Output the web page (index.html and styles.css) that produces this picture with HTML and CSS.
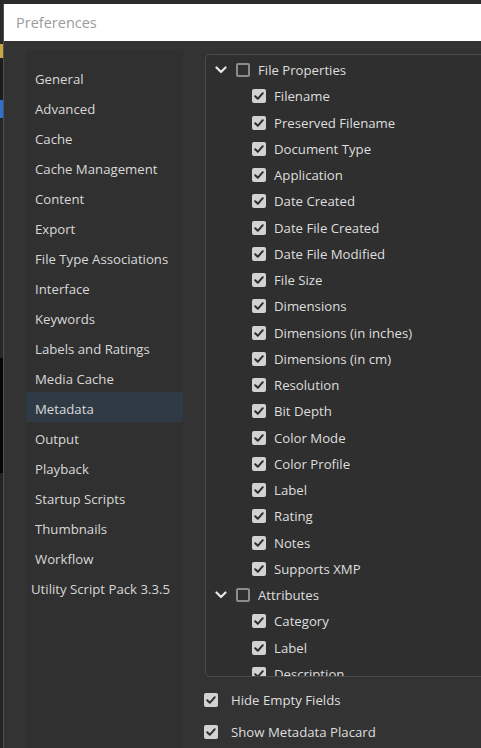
FILE: index.html
```html
<!DOCTYPE html>
<html>
<head>
<meta charset="utf-8">
<link rel="stylesheet" href="styles.css">
</head>
<body>
<div class="screen">
  <div class="bgstrip">
    <div class="seg s1"></div>
    <div class="seg s2"></div>
    <div class="seg s3"></div>
    <div class="seg s4"></div>
    <div class="seg s5"></div>
    <div class="seg s6"></div>
    <div class="seg s7"></div>
  </div>
  <div class="window">
    <div class="titlebar">Preferences</div>
    <div class="body">
      <nav class="nav">
        <div class="nav-item">General</div>
        <div class="nav-item">Advanced</div>
        <div class="nav-item">Cache</div>
        <div class="nav-item">Cache Management</div>
        <div class="nav-item">Content</div>
        <div class="nav-item">Export</div>
        <div class="nav-item">File Type Associations</div>
        <div class="nav-item">Interface</div>
        <div class="nav-item">Keywords</div>
        <div class="nav-item">Labels and Ratings</div>
        <div class="nav-item">Media Cache</div>
        <div class="nav-item active">Metadata</div>
        <div class="nav-item">Output</div>
        <div class="nav-item">Playback</div>
        <div class="nav-item">Startup Scripts</div>
        <div class="nav-item">Thumbnails</div>
        <div class="nav-item">Workflow</div>
        <div class="nav-item ext">Utility Script Pack 3.3.5</div>
      </nav>
      <div class="content">
        <div class="tree">
          <div class="row group"><span class="chev"><svg width="12" height="8" viewBox="0 0 12 8"><path d="M1.5 1.5 L6 6 L10.5 1.5" fill="none" stroke="#e6e6e6" stroke-width="2.2" stroke-linecap="round" stroke-linejoin="round"/></svg></span><span class="cb off"></span><span class="lbl">File Properties</span></div>
          <div class="row child"><span class="cb on"></span><span class="lbl">Filename</span></div>
          <div class="row child"><span class="cb on"></span><span class="lbl">Preserved Filename</span></div>
          <div class="row child"><span class="cb on"></span><span class="lbl">Document Type</span></div>
          <div class="row child"><span class="cb on"></span><span class="lbl">Application</span></div>
          <div class="row child"><span class="cb on"></span><span class="lbl">Date Created</span></div>
          <div class="row child"><span class="cb on"></span><span class="lbl">Date File Created</span></div>
          <div class="row child"><span class="cb on"></span><span class="lbl">Date File Modified</span></div>
          <div class="row child"><span class="cb on"></span><span class="lbl">File Size</span></div>
          <div class="row child"><span class="cb on"></span><span class="lbl">Dimensions</span></div>
          <div class="row child"><span class="cb on"></span><span class="lbl">Dimensions (in inches)</span></div>
          <div class="row child"><span class="cb on"></span><span class="lbl">Dimensions (in cm)</span></div>
          <div class="row child"><span class="cb on"></span><span class="lbl">Resolution</span></div>
          <div class="row child"><span class="cb on"></span><span class="lbl">Bit Depth</span></div>
          <div class="row child"><span class="cb on"></span><span class="lbl">Color Mode</span></div>
          <div class="row child"><span class="cb on"></span><span class="lbl">Color Profile</span></div>
          <div class="row child"><span class="cb on"></span><span class="lbl">Label</span></div>
          <div class="row child"><span class="cb on"></span><span class="lbl">Rating</span></div>
          <div class="row child"><span class="cb on"></span><span class="lbl">Notes</span></div>
          <div class="row child"><span class="cb on"></span><span class="lbl">Supports XMP</span></div>
          <div class="row group"><span class="chev"><svg width="12" height="8" viewBox="0 0 12 8"><path d="M1.5 1.5 L6 6 L10.5 1.5" fill="none" stroke="#e6e6e6" stroke-width="2.2" stroke-linecap="round" stroke-linejoin="round"/></svg></span><span class="cb off"></span><span class="lbl">Attributes</span></div>
          <div class="row child"><span class="cb on"></span><span class="lbl">Category</span></div>
          <div class="row child"><span class="cb on"></span><span class="lbl">Label</span></div>
          <div class="row child"><span class="cb on"></span><span class="lbl">Description</span></div>
        </div>
        <div class="opts">
          <div class="opt"><span class="cb on"></span><span class="lbl">Hide Empty Fields</span></div>
          <div class="opt"><span class="cb on"></span><span class="lbl">Show Metadata Placard</span></div>
        </div>
      </div>
    </div>
  </div>
</div>
</body>
</html>
```

FILE: styles.css
```css
html, body {
  margin: 0;
  padding: 0;
  background: #2b2b2b;
}
.screen {
  display: flex;
  width: 481px;
  height: 748px;
  overflow: hidden;
  font-family: "Open Sans", "Noto Sans", sans-serif;
}
.bgstrip {
  width: 3px;
  display: flex;
  flex-direction: column;
  background: #262626;
}
.seg { flex: none; }
.s1 { height: 44px; background: #2a2a2a; }
.s2 { height: 14px; background: #c9a642; }
.s3 { height: 42px; background: #1c1c1c; }
.s4 { height: 18px; background: #2f6fd0; }
.s5 { height: 240px; background: #262626; }
.s6 { height: 115px; background: #050505; }
.s7 { flex: 1; background: #242424; }
.window {
  flex: 1;
  min-width: 0;
  margin-top: 4px;
  border-left: 1px solid #505050;
  display: flex;
  flex-direction: column;
  background: #333333;
}
.titlebar {
  height: 37px;
  flex: none;
  background: #ffffff;
  color: #9b9b9b;
  font-size: 14.5px;
  line-height: 37px;
  padding-left: 12px;
}
.body {
  flex: 1;
  display: flex;
  min-height: 0;
}
.nav {
  flex: none;
  width: 157px;
  margin-left: 22px;
  margin-top: 9px;
  padding-top: 14px;
  background: #303030;
}
.nav-item {
  height: 30px;
  line-height: 30px;
  padding-left: 9px;
  font-size: 13.2px;
  color: #d8d8d8;
  white-space: nowrap;
}
.nav-item.active {
  background: #2f3a44;
  margin-top: -2px;
  margin-bottom: 2px;
  line-height: 34px;
}
.nav-item.ext {
  padding-left: 5px;
}
.content {
  flex: none;
  width: 320px;
  margin-left: 22px;
  display: flex;
  flex-direction: column;
}
.tree {
  margin-top: 13px;
  height: 623px;
  border: 1px solid #4b4b4b;
  border-radius: 5px;
  background: #2f2f2f;
  overflow: hidden;
  padding-top: 2px;
  box-sizing: border-box;
}
.row {
  height: 26.26px;
  display: flex;
  align-items: center;
  font-size: 13.2px;
  color: #dedede;
  white-space: nowrap;
}
.row.group { padding-left: 9px; }
.row.child { padding-left: 46px; }
.chev {
  width: 12px;
  height: 8px;
  display: flex;
  margin-right: 9px;
}
.chev svg { display: block; }
.cb {
  flex: none;
  width: 14px;
  height: 14px;
  box-sizing: border-box;
  border-radius: 2px;
  margin-right: 8px;
}
.cb.off {
  border: 2px solid #8c8c8c;
}
.cb.on {
  background: #d2d2d2 url("data:image/svg+xml;utf8,<svg xmlns='http://www.w3.org/2000/svg' width='14' height='14' viewBox='0 0 14 14'><path d='M3.2 7.2 L5.8 9.8 L10.8 4.2' fill='none' stroke='%232e2e2e' stroke-width='2' stroke-linecap='round' stroke-linejoin='round'/></svg>") center / 14px 14px no-repeat;
}
.opts {
  display: flex;
  flex-direction: column;
  padding-top: 7px;
}
.opt {
  height: 32px;
  display: flex;
  align-items: center;
  font-size: 13.2px;
  color: #dedede;
  margin-left: -1px;
  white-space: nowrap;
}
.opt .cb { margin-right: 13px; }
```
